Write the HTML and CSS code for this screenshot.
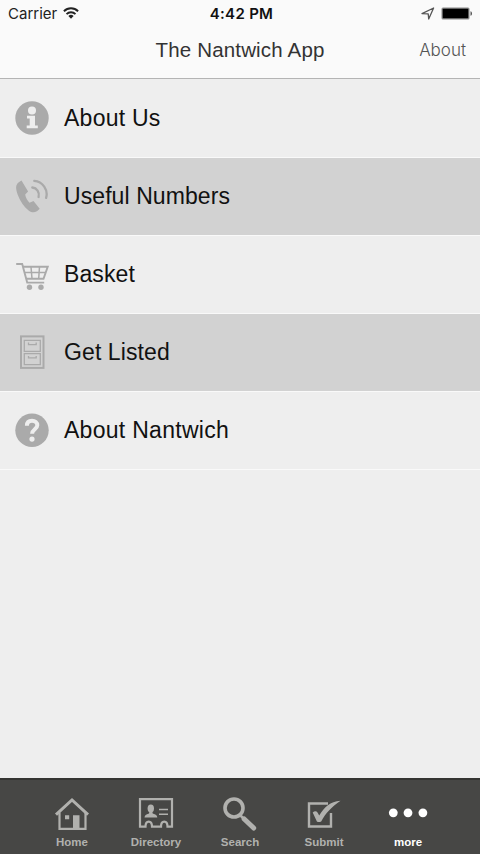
FILE: index.html
```html
<!DOCTYPE html>
<html lang="en">
<head>
<meta charset="utf-8">
<title>The Nantwich App</title>
<link rel="stylesheet" href="styles.css">
</head>
<body>
<div class="app">
  <header class="header">
    <div class="status">
      <div class="status-left">
        <span class="carrier">Carrier</span>
        <svg class="wifi" width="16" height="12" viewBox="0 0 16 12"><g fill="none" stroke="#222" stroke-width="1.9"><path d="M.9 4.2a10.2 10.2 0 0 1 14.2 0"/><path d="M3.5 7.1a6.4 6.4 0 0 1 9 0"/></g><path fill="#222" d="M8 11.7 5.4 9a3.8 3.8 0 0 1 5.2 0z"/></svg>
      </div>
      <span class="time">4:42 PM</span>
      <div class="status-right">
        <svg width="14" height="13" viewBox="0 0 14 13"><path d="M1 6.6 12.6 1 7.7 12 7.2 6.8z" fill="none" stroke="#555" stroke-width="1.3" stroke-linejoin="round"/></svg>
        <svg width="32" height="13" viewBox="0 0 32 13"><rect x=".5" y=".5" width="28" height="12" rx="1.5" fill="#888"/><rect x="1.7" y="1.7" width="25.6" height="9.6" rx=".7" fill="#000"/><path d="M29.5 4.2c2 .6 2 4 0 4.6z" fill="#555"/></svg>
      </div>
    </div>
    <nav class="nav">
      <span></span>
      <h1 class="title">The Nantwich App</h1>
      <span class="action">About</span>
    </nav>
  </header>
  <main class="list">
    <div class="row">
      <svg class="icon" viewBox="0 0 34 34"><circle cx="17" cy="17" r="16.7" fill="#aaa"/><g fill="#eee"><circle cx="17" cy="9.4" r="4"/><path d="M12 14.7h8v9.8h2.8v2.8H11.7v-2.8h3v-7H12z"/></g></svg>
      <span class="label about-us">About Us</span>
    </div>
    <div class="row alt">
      <svg class="icon" viewBox="0 0 34 34"><path fill="#aaa" d="M6.500 1.500Q1 4 1.100 8.500c.2 8 8.600 22.700 16 24.700 3 .6 6-1.400 7.600-3.500l-6.200-7.700-4 1.700c-2-1.700-4-5.200-4.300-8.200l2.900-3z"/><g fill="none" stroke="#aaa" stroke-width="2.300" stroke-linecap="round"><path d="M17.300 8.500c4.500.5 7.500 4.500 6.300 9.500"/><path d="M19.300 1.900c8.300.5 14.200 9 11.800 17"/></g></svg>
      <span class="label useful">Useful Numbers</span>
    </div>
    <div class="row">
      <svg class="icon" viewBox="0 0 34 34"><g fill="none" stroke="#aaa" stroke-width="1.900"><path d="M1.200 7h6l5 18.600h17"/><path d="M8 9.800h24.700l-4.200 11.900H11"/><path stroke-width="1.500" d="M9.700 15.600h20.500M16 9.800l1 11.900M24.500 9.800l-.8 11.900"/></g><circle cx="14.500" cy="30.200" r="2.700" fill="#aaa"/><circle cx="26" cy="30.200" r="2.700" fill="#aaa"/></svg>
      <span class="label basket">Basket</span>
    </div>
    <div class="row alt">
      <svg class="icon" viewBox="0 0 34 34"><g fill="none" stroke="#aaa"><rect x="6" y="1.400" width="22.500" height="31.500" stroke-width="2"/><path stroke-width="1.300" d="M9.300 5.300h16v11h-16zM9.300 18.600h16v11h-16z"/><path stroke-width="1.300" d="M13.500 7.600v2h7.700v-2M13.500 20.900v2h7.700v-2"/></g></svg>
      <span class="label listed">Get Listed</span>
    </div>
    <div class="row">
      <svg class="icon" viewBox="0 0 34 34"><circle cx="17" cy="17.300" r="16.700" fill="#aaa"/><path d="M11.900 12.800c0-3.200 2-5 5.100-5s5.300 1.700 5.300 4.500c0 4-5.200 4-5.200 8.500" fill="none" stroke="#eee" stroke-width="4"/><circle cx="17" cy="26.100" r="2.600" fill="#eee"/></svg>
      <span class="label nantwich">About Nantwich</span>
    </div>
  </main>
  <footer class="tabs">
    <div class="tab">
      <svg class="tab-icon" viewBox="0 0 36 36"><g fill="none" stroke="#b1b1ae" stroke-width="2.200"><path d="M2 17.600 18 3l16 14.600" stroke-width="3"/><path d="M5.500 15.500v16.300h26V15.500"/></g><path fill="#b1b1ae" d="M11 18.200h4.200v4H11zM19 18.200h6.500v14H19z"/></svg>
      <span class="tab-label">Home</span>
    </div>
    <div class="tab">
      <svg class="tab-icon" viewBox="0 0 36 36"><path d="M2 2.200h32v27.500h-4.500c0-6.800-6.500-6.800-6.500 0h-9c0-6.800-6.500-6.800-6.500 0H2z" fill="none" stroke="#b1b1ae" stroke-width="2.200"/><g fill="#b1b1ae"><ellipse cx="12.800" cy="11.500" rx="3.200" ry="4"/><path d="M6.500 20.500q0-3 4.500-4l.5-2h2.700l.5 2q4.600 1 4.600 4z"/></g><path d="M21 12.500h9M21 17.200h9" stroke="#b1b1ae" stroke-width="1.500"/></svg>
      <span class="tab-label">Directory</span>
    </div>
    <div class="tab">
      <svg class="tab-icon" viewBox="0 0 36 36"><circle cx="12" cy="11" r="9" fill="none" stroke="#b1b1ae" stroke-width="3.600"/><path d="m18 18 4 4" stroke="#b1b1ae" stroke-width="2.500"/><path d="m22.200 22 9.500 9" stroke="#b1b1ae" stroke-width="5" stroke-linecap="round"/></svg>
      <span class="tab-label">Search</span>
    </div>
    <div class="tab">
      <svg class="tab-icon" viewBox="0 0 36 36"><path d="M22 6.500H3v23h22V16" fill="none" stroke="#b1b1ae" stroke-width="2.400"/><path fill="#b1b1ae" d="M6.700 15.500q3-2.500 5 .3l1.500 2.700C18.500 10 24 4.500 34.500 3.700 26 9.500 19.500 16 15.200 24.500q-2.500 1-4.300 0z"/></svg>
      <span class="tab-label">Submit</span>
    </div>
    <div class="tab active">
      <svg class="tab-icon wide" viewBox="0 0 40 36"><g fill="#fff"><circle cx="5.300" cy="15.800" r="4.400"/><circle cx="20" cy="15.800" r="4.400"/><circle cx="34.900" cy="15.800" r="4.400"/></g></svg>
      <span class="tab-label">more</span>
    </div>
  </footer>
</div>
</body>
</html>
```
FILE: styles.css
```css
* { box-sizing: border-box; }
body {
  margin: 0;
  font-family: "Liberation Sans", Arial, sans-serif;
  background: #eee;
}
.app {
  display: flex;
  flex-direction: column;
  width: 480px;
  height: 854px;
}
.header {
  height: 79px;
  background: #fafafa;
  border-bottom: 1px solid #b4b4b4;
}
.status {
  display: grid;
  grid-template-columns: 1fr auto 1fr;
  align-items: center;
  height: 26px;
  padding: 0 7px 0 8px;
  font-family: Inter, sans-serif;
  font-size: 15px;
  color: #222;
}
.status-left, .status-right {
  display: flex;
  align-items: center;
  gap: 6px;
}
.status-right { justify-content: flex-end; }
.time {
  padding-left: 2px;
  font-weight: 600;
  letter-spacing: 0.3px;
  color: #111;
}
.nav {
  display: grid;
  grid-template-columns: 1fr auto 1fr;
  align-items: center;
  height: 47px;
  padding: 0 14px;
}
.title {
  margin: 0;
  font-size: 20.5px;
  font-weight: 400;
  letter-spacing: 0.17px;
  color: #333;
}
.action {
  justify-self: end;
  font-family: Inter, sans-serif;
  font-size: 17px;
  font-weight: 300;
  color: #555;
}
.list {
  flex: 1;
  padding-top: 0.5px;
}
.row {
  display: flex;
  align-items: center;
  gap: 15px;
  height: 78.1px;
  padding-left: 15px;
  border-bottom: 1.5px solid #f9f9f9;
}
.row.alt { background: #d2d2d2; }
.icon {
  width: 34px;
  height: 34px;
}
.label {
  padding-top: 1px;
  font-size: 23px;
  color: #111;
}
.about-us { letter-spacing: 0.25px; }
.useful { letter-spacing: 0.08px; }
.basket { letter-spacing: 0.1px; }
.listed { letter-spacing: 0.1px; }
.nantwich { letter-spacing: 0.28px; }
.tabs {
  display: flex;
  height: 76px;
  padding: 0 30px;
  background: #474745;
  border-top: 2px solid #343432;
}
.tab {
  display: flex;
  flex-direction: column;
  align-items: center;
  width: 84px;
  padding-top: 17px;
  color: #b1b1ae;
}
.tab-icon {
  width: 36px;
  height: 36px;
}
.tab-icon.wide { width: 40px; }
.tab-label {
  margin-top: 2px;
  font-size: 11.5px;
  line-height: 14px;
  font-weight: 700;
}
.active { color: #fff; }
```
